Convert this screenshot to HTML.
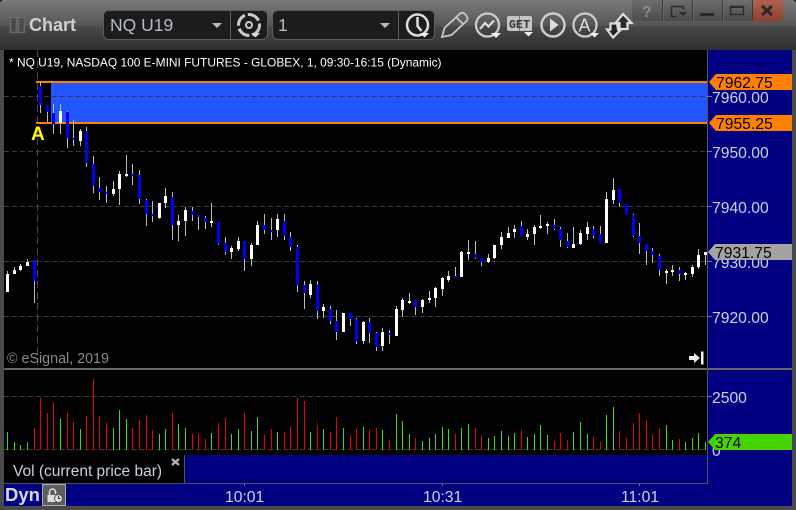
<!DOCTYPE html>
<html><head><meta charset="utf-8"><title>Chart</title>
<style>
html,body{margin:0;padding:0;background:#333;overflow:hidden}
svg{display:block;font-family:"Liberation Sans",sans-serif}
</style></head><body>
<svg width="796" height="510" viewBox="0 0 796 510" xmlns="http://www.w3.org/2000/svg">
<defs>
<linearGradient id="tb" x1="0" y1="0" x2="0" y2="1"><stop offset="0" stop-color="#7a7a7a"/><stop offset=".5" stop-color="#565656"/><stop offset=".54" stop-color="#484848"/><stop offset="1" stop-color="#2e2e2e"/></linearGradient>
<linearGradient id="wb" x1="0" y1="0" x2="0" y2="1"><stop offset="0" stop-color="#6e6e6e"/><stop offset="1" stop-color="#4c4c4c"/></linearGradient>
<linearGradient id="cb" x1="0" y1="0" x2="0" y2="1"><stop offset="0" stop-color="#b06250"/><stop offset="1" stop-color="#943e2c"/></linearGradient>
</defs>
<rect width="796" height="510" fill="#4a4a4a"/>
<rect width="796" height="50" fill="url(#tb)"/>
<path d="M0 0h4q-4 0-4 4zM796 0h-4q4 0 4 4z" fill="#1a1a1a"/>
<!-- chart areas -->
<rect x="4" y="50" width="704" height="433" fill="#000"/>
<rect x="708" y="50" width="84" height="456" fill="#000080"/>
<rect x="184" y="455" width="524" height="29" fill="#000080"/>
<rect x="4" y="484" width="788" height="22" fill="#000080"/>
<!-- selection -->
<rect x="51" y="83" width="656" height="39" fill="#2255ff"/>
<!-- grid -->
<path d="M4 96.5H707M4 151.5H707M4 206.5H707M4 261.5H707M4 316.5H707M4 396.5H707M4 449.5H707" stroke="#3a3a3a" stroke-dasharray="5 3" fill="none"/>
<path d="M37.5 50V368" stroke="#4a4a4a" stroke-dasharray="7 4" fill="none"/>
<path d="M36 82H707M36 123H707" stroke="#ff7f00" stroke-width="2" fill="none"/>
<!-- wicks -->
<path fill="none" stroke="#bdbdbd" d="M7.5 271V292M14.5 267V274M20.5 264V271M27.5 259V266M34.5 260V303M40.5 82V113M47.5 105V122M53.5 104V134M60.5 104V134M67.5 111V148M73.5 120V146M80.5 129V146M86.5 127V167M93.5 156V193M99.5 177V200M106.5 186V203M113.5 181V196M119.5 171V205M126.5 155V177M132.5 164V185M139.5 170V204M146.5 199V226M152.5 201V222M159.5 203V219M165.5 188V208M172.5 192V240M178.5 215V241M185.5 207V236M192.5 207V221M198.5 215V230M205.5 216V229M211.5 203V227M218.5 222V245M225.5 237V255M231.5 246V259M238.5 237V251M244.5 241V271M251.5 243V266M257.5 221V245M264.5 214V234M271.5 218V240M277.5 214V237M284.5 214V240M290.5 232V251M297.5 245V292M304.5 281V309M310.5 280V298M317.5 281V319M323.5 304V318M330.5 306V324M336.5 310V340M350.5 313V326M356.5 318V344M363.5 321V344M369.5 318V343M376.5 332V351M382.5 328V351M389.5 330V344M396.5 306V336M402.5 298V317M409.5 293V304M415.5 300V315M422.5 299V313M429.5 291V303M435.5 287V307M442.5 277V296M448.5 271V282M455.5 267V278M461.5 251V277M468.5 240V260M475.5 241V259M481.5 258V266M488.5 254V263M494.5 245V259M501.5 232V249M508.5 227V238M514.5 225V238M521.5 221V236M527.5 229V240M534.5 225V245M540.5 215V229M547.5 222V234M554.5 219V230M560.5 227V247M567.5 233V248M573.5 227V248M580.5 230V245M587.5 222V240M593.5 226V238M600.5 226V243M606.5 192V243M613.5 178V204M619.5 189V207M626.5 204V215M633.5 214V237M639.5 223V254M646.5 244V265M652.5 248V263M659.5 254V276M666.5 269V284M672.5 265V276M679.5 267V281M685.5 272V280M692.5 265V277M698.5 249V269M705.5 252V265"/>
<!-- blue bodies -->
<path fill="none" stroke="#0000f0" stroke-width="3" d="M34.5 260V281M40.5 86V105M47.5 105V112M53.5 113V124M67.5 112V138M73.5 138V140M86.5 131V163M93.5 164V186M99.5 188V192M106.5 192V194M132.5 174V176M139.5 175V199M146.5 200V214M152.5 214V216M172.5 197V225M192.5 211V215M198.5 215V217M205.5 218V222M218.5 222V244M225.5 243V252M244.5 241V259M264.5 225V230M271.5 230V232M284.5 221V236M290.5 237V247M297.5 247V285M304.5 285V293M317.5 285V311M330.5 309V321M336.5 321V332M350.5 313V319M356.5 319V341M369.5 322V333M376.5 333V347M389.5 333V335M415.5 300V307M455.5 276V278M475.5 254V258M481.5 258V262M521.5 226V236M554.5 225V229M560.5 229V240M567.5 241V247M593.5 229V236M600.5 234V243M619.5 189V203M626.5 204V215M633.5 215V236M639.5 236V243M646.5 244V251M652.5 251V255M659.5 256V270M679.5 270V274"/>
<!-- white bodies -->
<path fill="none" stroke="#fff" stroke-width="3" d="M7.5 274V292M14.5 270V274M20.5 266V270M27.5 262V266M60.5 111V123M80.5 131V141M113.5 189V194M119.5 174V189M126.5 174V176M159.5 203V218M165.5 196V203M178.5 221V225M185.5 210V221M211.5 221V223M231.5 248V252M238.5 241V249M251.5 245V259M257.5 225V245M277.5 219V230M310.5 284V295M323.5 307V311M343.5 313V332M363.5 322V341M382.5 332V346M396.5 309V336M402.5 300V310M409.5 301V303M422.5 300V307M429.5 298V300M435.5 288V298M442.5 278V289M448.5 276V280M461.5 252V277M468.5 252V254M488.5 258V262M494.5 245V258M501.5 237V245M508.5 233V238M514.5 229V232M527.5 234V237M534.5 227V234M540.5 226V228M547.5 224V226M573.5 244V248M580.5 233V244M587.5 227V234M606.5 199V243M613.5 190V200M666.5 271V273M672.5 270V272M685.5 273V275M692.5 267V274M698.5 255V267M705.5 252V255"/>
<!-- volume -->
<path fill="none" stroke="#44dd00" d="M7.5 432V450M14.5 442V450M20.5 445V450M27.5 442V450M60.5 419V450M80.5 429V450M113.5 428V450M119.5 410V450M126.5 419V450M159.5 434V450M165.5 429V450M178.5 424V450M185.5 428V450M211.5 433V450M231.5 434V450M238.5 429V450M251.5 431V450M257.5 417V450M277.5 432V450M310.5 432V450M323.5 429V450M343.5 428V450M363.5 427V450M382.5 430V450M396.5 414V450M402.5 421V450M409.5 434V450M422.5 441V450M429.5 438V450M435.5 434V450M442.5 427V450M448.5 429V450M461.5 428V450M468.5 424V450M488.5 438V450M494.5 436V450M501.5 431V450M508.5 436V450M514.5 433V450M527.5 437V450M534.5 434V450M540.5 425V450M547.5 435V450M573.5 432V450M580.5 422V450M587.5 434V450M606.5 415V450M613.5 407V450M666.5 425V450M672.5 440V450M685.5 442V450M692.5 438V450M698.5 433V450M705.5 442V450"/>
<path fill="none" stroke="#ee0000" d="M34.5 428V450M40.5 398V450M47.5 413V450M53.5 403V450M67.5 413V450M73.5 422V450M86.5 416V450M93.5 379V450M99.5 416V450M106.5 423V450M132.5 428V450M139.5 420V450M146.5 415V450M152.5 430V450M172.5 413V450M192.5 434V450M198.5 433V450M205.5 439V450M218.5 423V450M225.5 418V450M244.5 413V450M264.5 435V450M271.5 429V450M284.5 432V450M290.5 427V450M297.5 398V450M304.5 401V450M317.5 425V450M330.5 432V450M336.5 417V450M350.5 435V450M356.5 429V450M369.5 430V450M376.5 428V450M389.5 440V450M415.5 438V450M455.5 434V450M475.5 428V450M481.5 435V450M521.5 430V450M554.5 441V450M560.5 433V450M567.5 440V450M593.5 437V450M600.5 442V450M619.5 431V450M626.5 438V450M633.5 423V450M639.5 413V450M646.5 420V450M652.5 434V450M659.5 428V450M679.5 439V450"/>
<!-- dividers -->
<rect x="4" y="368" width="788" height="2" fill="#666"/>
<rect x="707" y="50" width="1" height="434" fill="#555"/>
<rect x="4" y="483" width="704" height="1" fill="#555"/>
<rect x="184" y="455" width="1" height="28" fill="#555"/>
<path d="M707 96.5h5M707 151.5h5M707 206.5h5M707 261.5h5M707 316.5h5M707 396.5h5M244.5 484v2M442.5 484v2M639.5 484v2" stroke="#777" fill="none"/>
<!-- chart text -->
<text x="9" y="66.5" fill="#fff" font-size="11.950">* NQ U19, NASDAQ 100 E-MINI FUTURES - GLOBEX, 1, 09:30-16:15 (Dynamic)</text>
<text x="31" y="140" fill="#ffff00" font-size="19" font-weight="700">A</text>
<text x="7" y="363" fill="#8a8a8a" font-size="14.300">© eSignal, 2019</text>
<path d="M689 356h5v-3l6 5-6 5v-3h-5zM701 351.500h2.500v13H701z" fill="#eee"/>
<text x="13" y="476" fill="#c8d0e0" font-size="15.500">Vol (current price bar)</text>
<path d="M172 459l7 6M179 459l-7 6" stroke="#b5b5b5" stroke-width="2.200"/>
<text x="5" y="501" fill="#d8d8d8" font-size="18.500" font-weight="700">Dyn</text>
<rect x="42.500" y="484.500" width="23" height="21" fill="#5e5e5e" stroke="#aaa"/>
<path d="M47.500 502v-7h8v7z" fill="#ddd"/>
<path d="M49.500 495v-3a3 3 0 0 1 6 0v2" fill="none" stroke="#ddd" stroke-width="1.500"/>
<circle cx="58.500" cy="498.500" r="4" fill="#ddd" stroke="#555"/>
<path d="M58.500 496v2.500h2" stroke="#333" fill="none"/>
<!-- axis labels -->
<g fill="#c8d4e8" font-size="15.700">
<text x="712" y="103">7960.00</text>
<text x="712" y="158">7950.00</text>
<text x="712" y="213">7940.00</text>
<text x="712" y="268">7930.00</text>
<text x="712" y="323">7920.00</text>
<text x="712" y="403">2500</text>
<text x="712" y="456">0</text>
<text x="225" y="502">10:01</text>
<text x="423" y="502">10:31</text>
<text x="621" y="502">11:01</text>
</g>
<path d="M709 82l7-8h76v16h-76z" fill="#ff7f00"/>
<path d="M709 123l7-8h76v16h-76z" fill="#ff7f00"/>
<path d="M708 252l7-8h77v16h-77z" fill="#a3a3a3"/>
<path d="M708 442l7-8h77v16h-77z" fill="#44d400"/>
<g fill="#000" font-size="15.700">
<text x="716" y="88">7962.75</text>
<text x="716" y="129">7955.25</text>
<text x="715" y="258">7931.75</text>
<text x="715" y="448">374</text>
</g>
<!-- title -->
<path d="M10.500 17.500h6v15h-6zM18.500 17.500h6v15h-6z" fill="#4a4a4a" stroke="#6a6a6a" stroke-width="1.500"/>
<text x="29" y="31" fill="#cfcfcf" font-size="18" font-weight="700">Chart</text>
<!-- combos -->
<rect x="103.500" y="10.500" width="164" height="29" rx="5" fill="#1c1c1c" stroke="#5e5e5e"/>
<path d="M230.500 11v28" stroke="#5e5e5e"/>
<rect x="272.500" y="10.500" width="162" height="29" rx="5" fill="#1c1c1c" stroke="#5e5e5e"/>
<path d="M398.500 11v28" stroke="#5e5e5e"/>
<text x="110" y="31" fill="#b4bcc8" font-size="17.500">NQ U19</text>
<text x="278" y="31" fill="#b4bcc8" font-size="17.500">1</text>
<path d="M212 23h10l-5 5zM380 23h10l-5 5z" fill="#bbb"/>
<!-- gear -->
<circle cx="249" cy="25" r="10.500" fill="none" stroke="#ccc" stroke-width="3" stroke-dasharray="13 3"/>
<circle cx="249" cy="25" r="3" fill="none" stroke="#ccc" stroke-width="2"/>
<path d="M251 33h9l-4.500 4.500z" fill="#ddd"/>
<!-- clock -->
<circle cx="417.500" cy="25" r="10.500" fill="none" stroke="#ddd" stroke-width="2.500"/>
<path d="M417.500 17v9l4 5" fill="none" stroke="#ddd" stroke-width="2.500"/>
<path d="M420 33h9l-4.500 4.500z" fill="#eee"/>
<!-- pencil -->
<path d="M442 37l2.500-9L459.500 14q3-2.500 5.500 0l1.500 2q2 2.500 0 5L451.500 35zM456.500 17.500l6.500 6.500" fill="none" stroke="#c8c8c8" stroke-width="1.800"/>
<!-- chart icon -->
<circle cx="487.500" cy="25" r="11.500" fill="none" stroke="#ccc" stroke-width="2.300"/>
<path d="M480 29l5-6 3.500 3.500 5.500-6" fill="none" stroke="#ddd" stroke-width="2.200"/>
<path d="M491 33h10l-5 5z" fill="#eee"/>
<!-- GET -->
<rect x="507" y="16" width="25" height="15" rx="2" fill="#c4c4c4"/>
<path d="M519.500 16v15" stroke="#777"/>
<text x="509" y="28" fill="#333" font-size="11.500" font-weight="700" font-family="Liberation Mono,monospace" textLength="21">GET</text>
<path d="M524 32h9l-4.500 4.500z" fill="#eee"/>
<!-- play -->
<circle cx="553" cy="25" r="11.500" fill="none" stroke="#ccc" stroke-width="2.500"/>
<path d="M550 18.500l8.500 6.500-8.500 6.500z" fill="#ddd"/>
<!-- A -->
<circle cx="585" cy="25" r="11.500" fill="none" stroke="#ccc" stroke-width="2.300"/>
<text x="578.500" y="31.500" fill="#ddd" font-size="18">A</text>
<path d="M590 33h9l-4.500 4.500z" fill="#eee"/>
<!-- arrows -->
<path d="M613 37.500l-6-8h3.500v-6h6.500l1 6h3z" fill="#222" stroke="#ddd" stroke-width="2.200"/>
<path d="M623 14l8.500 9h-4v6h-8v-6h-4z" fill="#2a2a2a" stroke="#ddd" stroke-width="2.200"/>
<!-- window buttons -->
<path d="M632 0h120v21h-116q-4 0-4-4z" fill="url(#wb)"/>
<path d="M752 0h31v17q0 4-4 4h-27z" fill="url(#cb)"/>
<path d="M662.500 0v21M692.500 0v21M722.500 0v21M752.500 0v21" stroke="#3a3a3a"/>
<path d="M663.500 0v21M693.500 0v21M723.500 0v21" stroke="#7a7a7a" opacity=".5"/>
<text x="642" y="17" fill="#8c8c8c" font-size="15.500" font-weight="700">?</text>
<path d="M671.500 6.500h12v3M671.500 6.500v10h5" fill="none" stroke="#2a2a2a" stroke-width="1.500"/>
<path d="M679 12h8l-4 4z" fill="#2a2a2a"/>
<rect x="700" y="13" width="14" height="3" fill="#2a2a2a"/>
<rect x="730.500" y="6.500" width="13" height="8" fill="none" stroke="#2a2a2a" stroke-width="1.500"/>
<path d="M730 7h14" stroke="#2a2a2a" stroke-width="2"/>
<path d="M762 6l10 9M772 6l-10 9" stroke="#2a2a2a" stroke-width="3"/>
</svg>
</body></html>
